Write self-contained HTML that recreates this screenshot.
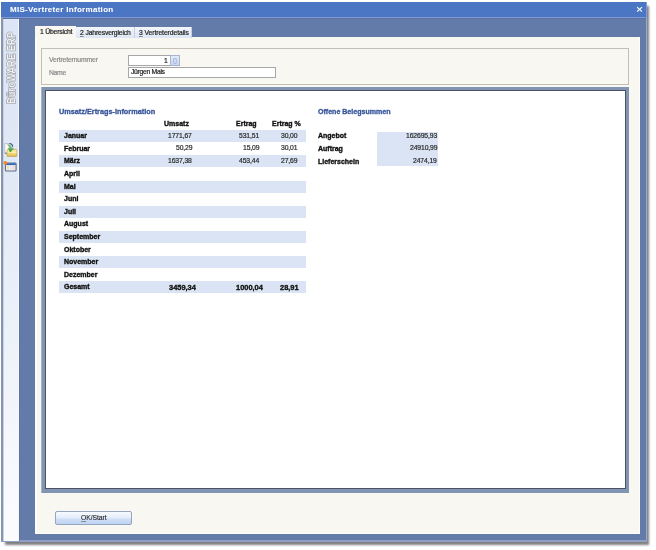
<!DOCTYPE html>
<html><head><meta charset="utf-8">
<style>
*{margin:0;padding:0;box-sizing:border-box}
html,body{width:656px;height:550px;background:#fff;overflow:hidden;font-family:"Liberation Sans",sans-serif}
.a{position:absolute}
.t{position:absolute;white-space:nowrap;line-height:1;will-change:transform;-webkit-text-stroke:0.2px currentColor}
.mb{font-size:7px;font-weight:bold;color:#111;-webkit-text-stroke:0.35px #111}
.nm{font-size:6.8px;letter-spacing:-0.12px;color:#2a2a2a;-webkit-text-stroke:0.2px #2a2a2a}
.nb{font-size:7.45px;font-weight:bold;color:#111;-webkit-text-stroke:0.35px #111}
.hd{font-size:7px;font-weight:bold;color:#111;-webkit-text-stroke:0.35px #111}
.bl{font-size:7.3px;font-weight:bold;color:#36549a;-webkit-text-stroke:0.3px #36549a}
</style></head><body>
<!-- shadow -->
<div class="a" style="left:5px;top:6px;width:644px;height:539px;background:#808080;filter:blur(1.3px)"></div>
<!-- window -->
<div class="a" style="left:1px;top:2px;width:646px;height:539px;background:#637ba8"></div>
<!-- title bar -->
<div class="a" style="left:1px;top:2px;width:646px;height:15px;background:#4a76c4"></div>
<div class="a" style="left:645.8px;top:2px;width:1.2px;height:15px;background:#7e9ad6"></div>
<div class="a" style="left:1px;top:17px;width:646px;height:1px;background:#7f98cf"></div>
<div class="a" style="left:1px;top:18px;width:645px;height:1px;background:#5a72a4"></div>
<div class="t" style="left:10px;top:6px;font-size:8px;letter-spacing:0.3px;font-weight:bold;color:#fff;-webkit-text-stroke:0.05px #fff">MIS-Vertreter Information</div>
<svg class="a" style="left:634px;top:4px" width="12" height="10" viewBox="0 0 12 10"><path d="M3.1 3.1 L8 7.6 M8 3.1 L3.1 7.6" stroke="#fff" stroke-width="1.15"/></svg>
<!-- right light edge -->
<div class="a" style="left:645.8px;top:18px;width:1.2px;height:523px;background:#9aabd2"></div>
<div class="a" style="left:1px;top:540px;width:646px;height:1.5px;background:#8f9fc8"></div>
<!-- sidebar -->
<div class="a" style="left:1px;top:18px;width:2px;height:523px;background:#8794ae"></div>
<div class="a" style="left:3px;top:19px;width:16px;height:522px;background:linear-gradient(#dbe5f5,#e2e9f6 31%,#e7eef8 45%,#fbfcfe)"></div>
<div class="a" style="left:3px;top:19px;width:0.8px;height:522px;background:#c9d1e2"></div>
<div class="a" style="left:18.2px;top:19px;width:0.8px;height:522px;background:#f6f8fd"></div>
<div class="a" style="left:19px;top:18px;width:1px;height:523px;background:#5f73a3"></div>
<div class="t" style="left:6.6px;top:103.6px;font-size:10px;font-weight:bold;color:#f4f4f4;transform-origin:0 0;transform:rotate(-90deg) scaleX(0.94);-webkit-text-stroke:1.1px #858993;paint-order:stroke fill">BüroWARE ERP</div>
<svg class="a" style="left:3px;top:142px" width="16" height="16" viewBox="0 0 16 16">
 <defs><linearGradient id="fg" x1="0" y1="0" x2="0" y2="1"><stop offset="0" stop-color="#f9eeb0"/><stop offset="0.5" stop-color="#f3dc7c"/><stop offset="1" stop-color="#dfbd55"/></linearGradient>
 <linearGradient id="ag" x1="0" y1="0" x2="0" y2="1"><stop offset="0" stop-color="#9ad88a"/><stop offset="1" stop-color="#1d9a2a"/></linearGradient></defs>
 <path d="M1.8 1.6 h5.2 q2.3 0.2 2.6 2.6 v7 h-7.8 z" fill="#fbfcfe" stroke="#9aa3b6" stroke-width="0.6"/>
 <path d="M6.4 1.5 q3 0.1 3.3 3.2" fill="none" stroke="#3d5796" stroke-width="1.1"/>
 <path d="M1.8 11.2 h3" stroke="#5b6478" stroke-width="0.8"/>
 <path d="M4 8 q0 -0.6 0.6 -0.6 h8.4 q0.9 0 0.9 0.9 v5.4 q0 0.7 -0.7 0.7 h-8.6 q-0.6 0 -0.6 -0.6 z" fill="url(#fg)" stroke="#b8963f" stroke-width="0.6"/>
 <path d="M4.5 10.3 h9" stroke="#fff4c0" stroke-width="0.9"/>
 <path d="M4.6 2.6 q3.6 0 4.2 4.4 l1.6 -0.4 -3.2 3.6 -1.9 -4 1.5 0.3 q-0.5 -2.4 -2.2 -3.9 z" fill="url(#ag)" stroke="#26822d" stroke-width="0.35"/>
</svg>
<svg class="a" style="left:3px;top:160px" width="16" height="14" viewBox="0 0 16 14">
 <rect x="2.4" y="3" width="10.7" height="8" rx="1" fill="#eef0f4" stroke="#5d6b88" stroke-width="1.1"/>
 <rect x="2.9" y="3.3" width="9.8" height="1.8" fill="#3464b4"/>
 <rect x="4" y="6" width="2.2" height="4" fill="#efe2b8"/>
 <rect x="6.8" y="6" width="2.2" height="4" fill="#e6e9ee"/>
 <rect x="9.6" y="6" width="2.2" height="4" fill="#efd8d0"/>
 <circle cx="2.4" cy="2.9" r="1.9" fill="#f08a1a"/>
</svg>

<!-- cream panel -->
<div class="a" style="left:35px;top:37px;width:605px;height:497px;background:#f8f7f1"></div>
<div class="a" style="left:35px;top:26px;width:1.5px;height:508px;background:#fdfdfb"></div>
<div class="a" style="left:638.5px;top:37px;width:1.5px;height:497px;background:#fdfdfb"></div>
<div class="a" style="left:35px;top:532.8px;width:605px;height:1.2px;background:#fdfdfb"></div>
<!-- tabs -->
<div class="a" style="left:35px;top:26px;width:41px;height:12px;background:#f8f7f1"></div>
<div class="a" style="left:76px;top:27px;width:59px;height:11px;background:linear-gradient(#f2f6fc,#dde6f4);border-right:1px solid #c5cfe2"></div>
<div class="a" style="left:135px;top:27px;width:57px;height:11px;background:linear-gradient(#f2f6fc,#dde6f4);border-right:1px solid #c5cfe2"></div>
<div class="t" style="left:40px;top:29px;font-size:6.8px;letter-spacing:-0.2px;color:#222">1 Übersicht</div>
<div class="t" style="left:80px;top:30px;font-size:6.8px;letter-spacing:-0.15px;color:#222"><u style="text-decoration-color:#8a8a8a">2</u> Jahresvergleich</div>
<div class="t" style="left:139px;top:30px;font-size:6.8px;letter-spacing:-0.09px;color:#222"><u style="text-decoration-color:#8a8a8a">3</u> Vertreterdetails</div>

<!-- group box -->
<div class="a" style="left:41px;top:48px;width:588px;height:37px;border:1px solid #c2c0b6"></div>
<div class="t" style="left:49px;top:56.9px;font-size:6.8px;letter-spacing:-0.15px;color:#8a8a8a">Vertreternummer</div>
<div class="t" style="left:49px;top:69.7px;font-size:6.8px;letter-spacing:-0.3px;color:#8a8a8a">Name</div>
<div class="a" style="left:128px;top:55px;width:43px;height:11px;background:#fff;border:1px solid #a6a7a6"></div>
<div class="a" style="left:170px;top:55px;width:10px;height:11px;background:linear-gradient(#e1eafa,#c8d7f2);border:1px solid #a9b5cc"></div>
<div class="a" style="left:173.3px;top:57.5px;width:3.4px;height:6px;border:1px solid #a8b8e0;border-radius:50%"></div>
<div class="t" style="left:164px;top:58px;font-size:6.8px;color:#222">1</div>
<div class="a" style="left:128px;top:67px;width:148px;height:11px;background:#fff;border:1px solid #a6a7a6"></div>
<div class="t" style="left:131px;top:69.4px;font-size:6.8px;letter-spacing:-0.3px;color:#222">Jürgen Mals</div>

<!-- report frame -->
<div class="a" style="left:41px;top:87px;width:588px;height:406px;background:#8194b2"></div>
<div class="a" style="left:41px;top:87px;width:1px;height:406px;background:#a9b2c6"></div>
<div class="a" style="left:45px;top:90px;width:581px;height:399px;background:#fff;border:1px solid #4b5266;border-width:1.5px 1.5px 1.5px 1px"></div>

<!-- report content -->
<div class="t bl" style="left:58.8px;top:107.8px">Umsatz/Ertrags-Information</div>
<div class="t hd" style="left:163.8px;top:120.3px">Umsatz</div>
<div class="t hd" style="left:235.9px;top:120.3px">Ertrag</div>
<div class="t hd" style="left:272.1px;top:120.3px">Ertrag %</div>
<div class="a" style="left:59px;top:130px;width:247px;height:12px;background:#dae4f4"></div>
<div class="a" style="left:59px;top:155px;width:247px;height:12px;background:#dae4f4"></div>
<div class="a" style="left:59px;top:181px;width:247px;height:12px;background:#dae4f4"></div>
<div class="a" style="left:59px;top:206px;width:247px;height:12px;background:#dae4f4"></div>
<div class="a" style="left:59px;top:231px;width:247px;height:12px;background:#dae4f4"></div>
<div class="a" style="left:59px;top:256px;width:247px;height:12px;background:#dae4f4"></div>
<div class="a" style="left:59px;top:281px;width:247px;height:12px;background:#dae4f4"></div>
<div class="t mb" style="left:63.5px;top:132.1px">Januar</div>
<div class="t nm" style="right:464.0px;top:132.8px">1771,67</div>
<div class="t nm" style="right:396.8px;top:132.8px">531,51</div>
<div class="t nm" style="right:358.1px;top:132.8px">30,00</div>
<div class="t mb" style="left:63.5px;top:144.7px">Februar</div>
<div class="t nm" style="right:464.0px;top:145.4px">50,29</div>
<div class="t nm" style="right:396.8px;top:145.4px">15,09</div>
<div class="t nm" style="right:358.1px;top:145.4px">30,01</div>
<div class="t mb" style="left:63.5px;top:157.3px">März</div>
<div class="t nm" style="right:464.0px;top:158.0px">1637,38</div>
<div class="t nm" style="right:396.8px;top:158.0px">453,44</div>
<div class="t nm" style="right:358.1px;top:158.0px">27,69</div>
<div class="t mb" style="left:63.5px;top:169.9px">April</div>
<div class="t mb" style="left:63.5px;top:182.5px">Mai</div>
<div class="t mb" style="left:63.5px;top:195.1px">Juni</div>
<div class="t mb" style="left:63.5px;top:207.7px">Juli</div>
<div class="t mb" style="left:63.5px;top:220.3px">August</div>
<div class="t mb" style="left:63.5px;top:232.9px">September</div>
<div class="t mb" style="left:63.5px;top:245.5px">Oktober</div>
<div class="t mb" style="left:63.5px;top:258.1px">November</div>
<div class="t mb" style="left:63.5px;top:270.7px">Dezember</div>
<div class="t mb" style="left:63.5px;top:283.3px">Gesamt</div>
<div class="t nb" style="right:460.6px;top:284.0px">3459,34</div>
<div class="t nb" style="right:393.6px;top:284.0px">1000,04</div>
<div class="t nb" style="right:357.2px;top:284.0px">28,91</div>
<div class="t bl" style="left:317.9px;top:108.2px;font-size:7.05px">Offene Belegsummen</div>
<div class="a" style="left:377px;top:132px;width:61px;height:34px;background:#dae4f4"></div>
<div class="t mb" style="left:317.9px;top:132.3px">Angebot</div>
<div class="t mb" style="left:317.9px;top:145px">Auftrag</div>
<div class="t mb" style="left:317.9px;top:157.5px">Lieferschein</div>
<div class="t nm" style="right:219px;top:132.6px">162695,93</div>
<div class="t nm" style="right:219px;top:145.3px">24910,99</div>
<div class="t nm" style="right:219px;top:157.8px">2474,19</div>

<!-- OK button -->
<div class="a" style="left:55px;top:511px;width:77px;height:14px;border:1px solid #97a4bd;border-radius:2px;background:linear-gradient(#f7faff,#e6eefb 45%,#cfdff6 60%,#bed3f2)"></div>
<div class="t" style="left:81px;top:515px;font-size:6.8px;letter-spacing:-0.07px;color:#222;-webkit-text-stroke:0.1px #222"><u style="text-decoration-color:#8a8a8a">O</u>K/Start</div>
</body></html>
